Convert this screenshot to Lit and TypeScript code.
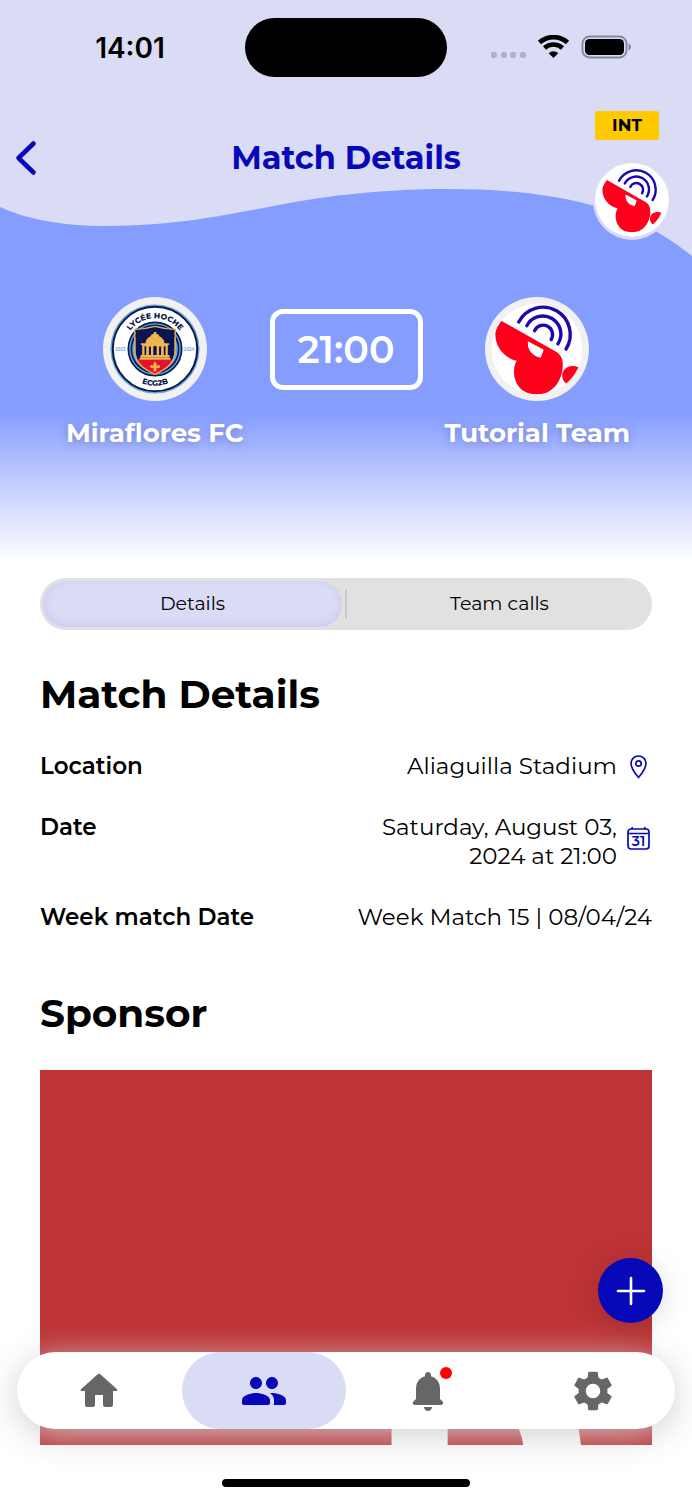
import { LitElement, html, css, svg } from "lit";
import { customElement, property, state } from "lit/decorators.js";
import { classMap } from "lit/directives/class-map.js";

const ICONS = {
  home: "M10 19v-5h4v5c0 .55.45 1 1 1h3c.55 0 1-.45 1-1v-7h1.7c.46 0 .68-.57.33-.87L12.67 3.6c-.38-.34-.96-.34-1.34 0l-8.36 7.53c-.34.3-.13.87.33.87H5v7c0 .55.45 1 1 1h3c.55 0 1-.45 1-1z",
  team: "M16 11c1.66 0 2.99-1.34 2.99-3S17.66 5 16 5s-3 1.34-3 3 1.34 3 3 3zm-8 0c1.66 0 2.99-1.34 2.99-3S9.66 5 8 5 5 6.34 5 8s1.34 3 3 3zm0 2c-2.33 0-7 1.17-7 3.5V18c0 .55.45 1 1 1h12c.55 0 1-.45 1-1v-1.5c0-2.33-4.67-3.5-7-3.5zm8 0c-.29 0-.62.02-.97.05.02.01.03.03.04.04 1.14.83 1.93 1.94 1.93 3.41V18c0 .35-.07.69-.18 1H22c.55 0 1-.45 1-1v-1.5c0-2.33-4.67-3.5-7-3.5z",
  bell: "M12 22c1.1 0 2-.9 2-2h-4c0 1.1.89 2 2 2zm6-6v-5c0-3.07-1.64-5.64-4.5-6.32V4c0-.83-.67-1.5-1.5-1.5s-1.5.67-1.5 1.5v.68C7.63 5.36 6 7.92 6 11v5l-1.29 1.29c-.63.63-.19 1.71.7 1.71h13.17c.89 0 1.34-1.08.71-1.71L18 16z",
  gear: "M19.14 12.94c.04-.3.06-.61.06-.94 0-.32-.02-.64-.07-.94l2.03-1.58c.18-.14.23-.41.12-.61l-1.92-3.32c-.12-.22-.37-.29-.59-.22l-2.39.96c-.5-.38-1.03-.7-1.62-.94l-.36-2.54c-.04-.24-.24-.41-.48-.41h-3.84c-.24 0-.43.17-.47.41l-.36 2.54c-.59.24-1.13.57-1.62.94l-2.39-.96c-.22-.08-.47 0-.59.22L2.74 8.87c-.12.21-.08.47.12.61l2.03 1.58c-.05.3-.09.63-.09.94s.02.64.07.94l-2.03 1.58c-.18.14-.23.41-.12.61l1.92 3.32c.12.22.37.29.59.22l2.39-.96c.5.38 1.03.7 1.62.94l.36 2.54c.05.24.24.41.48.41h3.84c.24 0 .44-.17.47-.41l.36-2.54c.59-.24 1.13-.56 1.62-.94l2.39.96c.22.08.47 0 .59-.22l1.92-3.32c.12-.22.07-.47-.12-.61l-2.01-1.58zM12 15.6c-1.98 0-3.6-1.62-3.6-3.6s1.62-3.6 3.6-3.6 3.6 1.62 3.6 3.6-1.62 3.6-3.6 3.6z",
};

@customElement("whistle-logo")
class WhistleLogo extends LitElement {
  @property() ring = "#f1f1f1";

  static styles = css`
    :host { display: block; }
    svg { display: block; width: 100%; height: 100%; }
  `;

  render() {
    return html`<svg viewBox="-154 -154 308 308" role="img" aria-label="Tutorial Team logo">
      <defs><clipPath id="disc"><circle r="134" /></clipPath></defs>
      <circle r="154" fill=${this.ring} />
      <circle r="134" fill="#fff" />
      <g clip-path="url(#disc)">
        <path fill="#ff001c" d="M-106-84 54 7C74 18 78 36 76 54C74 92 48 135 0 135C-45 135-70 102-68 62C-67 50-64 42-60 35C-98 26-126-8-123-48C-121-63-114-76-106-84Z" />
        <path fill="#fff" d="M-27-23 20 2 11 26C-14 20-29 4-27-23Z" />
        <path fill="#ff001c" d="M126 56C104 44 80 52 75 74C73 89 80 99 94 107Z" />
      </g>
      <g fill="none" stroke="#1c08ae" stroke-width="10" stroke-linecap="round">
        <path d="M-54-80A80.7 80.7 0 1 1 86 0" />
        <path d="M-30-69A53.4 53.4 0 1 1 62-15" />
        <path d="M-7-54A27.8 27.8 0 1 1 42-28" />
      </g>
    </svg>`;
  }
}

@customElement("lycee-logo")
class LyceeLogo extends LitElement {
  static styles = css`
    :host { display: block; }
    svg { display: block; width: 100%; height: 100%; }
    .ring-text { font: 800 23px Montserrat, Inter, sans-serif; fill: #0a1a4a; text-anchor: middle; }
    .year { font: 700 13px Montserrat, Inter, sans-serif; fill: #7db3e2; text-anchor: middle; }
  `;

  render() {
    return html`<svg viewBox="-154 -154 308 308" role="img" aria-label="Lycée Hoche ECG2B crest">
      <defs>
        <path id="top" d="M-91 0A91 91 0 0 1 91 0" />
        <path id="bottom" d="M-109 0A109 109 0 0 0 109 0" />
        <clipPath id="shield"><path d="M-58-56Q-30-57 0-67Q30-57 58-56V0C58 42 34 60 0 74C-34 60-58 42-58 0Z" /></clipPath>
      </defs>
      <circle r="154" fill="#f1f1f1" />
      <circle r="132" fill="#6aa6dc" />
      <circle r="125" fill="#fff" stroke="#0a1a4a" stroke-width="6" />
      <circle r="79" fill="#6aa6dc" stroke="#0a1a4a" stroke-width="5" />
      <circle r="70" fill="#6aa6dc" stroke="#0a1a4a" stroke-width="5" />
      <g clip-path="url(#shield)">
        <rect x="-70" y="-70" width="140" height="150" fill="#0a1450" />
        <rect x="-70" y="31" width="140" height="60" fill="#e8102e" />
        <path fill="#f0b54e" d="M-43 26V18H-38V-12H-42V-17H-28C-27-30-20-34-13-38Q-12-44-4-45V-50H4V-45Q12-44 13-38C20-34 27-30 28-17H42V-12H38V18H43V26Z" />
        <path fill="#0a1450" d="M-31-8H-26V18H-31ZM-18-6Q-15-11-12-6V18H-18ZM-5-6Q0-13 5-6V18H-5ZM12-6Q15-11 18-6V18H12ZM26-8H31V18H26Z" />
        <path fill="#f0b54e" d="M-46 26H46V32H-46ZM0 37Q9 46 3 54Q10 42 15 51Q15 58 8 57H3L5 66H-5L-3 57H-8Q-15 58-15 51Q-10 42-3 54Q-9 46 0 37Z" />
      </g>
      <path d="M-60-58Q-30-59 0-67Q30-59 60-58V0C60 42 34 60 0 75C-34 60-60 42-60 0Z" fill="none" stroke="#e2ac55" stroke-width="4" />
      <text class="ring-text"><textPath href="#top" startOffset="50%">LYCÉE HOCHE</textPath></text>
      <text class="ring-text"><textPath href="#bottom" startOffset="50%">ECG2B</textPath></text>
      <text class="year" x="-103" y="5">2023</text>
      <text class="year" x="101" y="5">2024</text>
    </svg>`;
  }
}

@customElement("app-root")
class AppRoot extends LitElement {
  @state() private tab = "Details";

  static styles = css`
    :host {
      --navy: #0708b8;
      --lavender: #dadbf5;
      --sky: #859dff;
      display: flex;
      flex-direction: column;
      position: relative;
      box-sizing: border-box;
      height: 100vh;
      min-height: 1240px;
      background: #fff;
      color: #000;
      font-family: Montserrat, Inter, "Liberation Sans", sans-serif;
      overflow: hidden;
    }
    * { box-sizing: border-box; }
    h1, h2, dl, dd, dt, p { margin: 0; }
    svg { display: block; }
    button { font: inherit; color: inherit; border: 0; padding: 0; background: none; cursor: pointer; }

    .hero {
      display: grid;
      grid-template-columns: minmax(0, 1fr);
      height: 563px;
      flex: none;
      background: linear-gradient(var(--sky) 412px, #c8d2ff 490px, #fff 563px);
    }
    .wave { grid-area: 1 / 1; width: 100%; height: 260px; }
    .hero-content { grid-area: 1 / 1; display: flex; flex-direction: column; }

    .status {
      display: grid;
      grid-template-columns: 1fr 202px 1fr;
      align-items: center;
      height: 59px;
      margin-top: 18px;
    }
    .time { padding-left: 15px; text-align: center; font: 600 28px/32px Inter, sans-serif; }
    .island { height: 59px; border-radius: 30px; background: #000; }
    .indicators { display: flex; justify-content: flex-end; padding-right: 60px; }

    .appbar {
      display: grid;
      grid-template-columns: 1fr auto 1fr;
      align-items: start;
      margin-top: 34px;
      height: 129px;
    }
    .back { display: grid; width: 52px; height: 48px; margin-top: 23px; place-items: center; }
    .title { margin-top: 27px; font-size: 32px; line-height: 40px; font-weight: 700; color: var(--navy); }
    .corner { display: flex; flex-direction: column; align-items: flex-end; gap: 23px; padding-right: 23px; }
    .env {
      width: 64px;
      margin-right: 10px;
      border-radius: 3px;
      background: #ffc900;
      text-align: center;
      font-size: 17px;
      line-height: 29px;
      font-weight: 700;
    }
    .avatar { width: 74px; height: 74px; border-radius: 50%; box-shadow: 0 1px 0 2px var(--lavender); }

    .versus {
      display: grid;
      grid-template-columns: 1fr 153px 1fr;
      align-items: start;
      margin-top: 57px;
      padding: 0 40px;
    }
    .team { display: flex; flex-direction: column; align-items: center; gap: 16px; }
    .crest { width: 104px; height: 104px; }
    .team-name {
      font-size: 26px;
      line-height: 32px;
      font-weight: 700;
      color: #fff;
      white-space: nowrap;
      text-shadow: 0 2px 8px rgba(60, 70, 150, .4);
    }
    .kickoff {
      display: grid;
      place-items: center;
      height: 81px;
      margin-top: 12px;
      border: 5px solid #fff;
      border-radius: 13px;
      color: #fff;
      font-size: 38px;
      line-height: 44px;
      font-weight: 600;
    }

    .body { display: flex; flex: 1; flex-direction: column; min-height: 0; padding: 15px 40px 0; }
    .tabs {
      display: grid;
      grid-template-columns: 1fr 2px 1fr;
      align-items: center;
      gap: 3px;
      flex: none;
      height: 52px;
      padding: 3px;
      border-radius: 26px;
      background: #e1e1e1;
    }
    .tab { height: 46px; border-radius: 23px; font-size: 19px; line-height: 24px; }
    .tab.active { background: var(--lavender); box-shadow: inset 0 -2px 10px #c9c9f1; }
    .divider { height: 30px; background: #cacaca; }

    .heading { font-size: 39px; line-height: 48px; font-weight: 700; }
    .details-heading { margin-top: 40px; }
    .details { display: grid; gap: 32px; margin-top: 34px; font-size: 23px; line-height: 29px; }
    .row { display: flex; justify-content: space-between; gap: 16px; }
    .label { font-weight: 600; }
    .value { display: flex; align-items: center; gap: 10px; text-align: right; }
    .value-text { max-width: 240px; }
    .value-text.wide { max-width: none; }
    .calendar-day { font: 600 14px Montserrat, Inter, sans-serif; fill: var(--navy); text-anchor: middle; }
    .sponsor-heading { margin-top: 57px; }
    .sponsor { flex: 1; min-height: 0; margin-top: 33px; width: 100%; background: #be3336; }

    .home-area { display: grid; flex: none; height: 55px; justify-content: center; padding-top: 34px; }
    .home-indicator { width: 248px; height: 8px; border-radius: 4px; background: #000; }

    .fab {
      position: absolute;
      right: 29px;
      bottom: 177px;
      display: grid;
      place-items: center;
      width: 65px;
      height: 65px;
      border-radius: 50%;
      background: var(--navy);
      box-shadow: 0 4px 30px rgba(0, 0, 0, .14);
    }
    .nav {
      position: absolute;
      left: 17px;
      right: 17px;
      bottom: 71px;
      display: grid;
      grid-template-columns: repeat(4, 1fr);
      height: 77px;
      border-radius: 39px;
      background: #fff;
      box-shadow: 0 6px 34px rgba(206, 206, 206, .95);
      color: #666;
    }
    .nav-link { display: grid; place-items: center; border-radius: 39px; color: inherit; }
    .nav-link.active { background: var(--lavender); color: var(--navy); }
    .nav-icon { position: relative; }
    .dot {
      position: absolute;
      top: 0;
      right: 0;
      width: 12px;
      height: 12px;
      border-radius: 50%;
      background: #f00;
    }
  `;

  private tabButton(name: string) {
    const active = this.tab === name;
    return html`<button class=${classMap({ tab: true, active })} role="tab" aria-selected=${active}
      @click=${() => (this.tab = name)}>${name}</button>`;
  }

  private navLink(label: string, icon: string, active = false, dot = false) {
    return html`<a class=${classMap({ "nav-link": true, active })} href="#${label.toLowerCase()}" aria-label=${label}>
      <span class="nav-icon">
        <svg width="48" height="48" viewBox="0 0 24 24" fill="currentColor" aria-hidden="true">${svg`<path d=${icon} />`}</svg>
        ${dot ? html`<span class="dot"></span>` : ""}
      </span>
    </a>`;
  }

  render() {
    return html`
      <header class="hero">
        <svg class="wave" viewBox="0 0 692 260" preserveAspectRatio="none" aria-hidden="true">
          <path fill="#dadbf5" d="M0 0V207C30 221 70 226 105 226C200 226 260 206 320 198C370 191 410 189 446 189C505 189 550 194 591 205C630 215 665 234 692 256V0Z" />
        </svg>
        <div class="hero-content">
          <div class="status">
            <span class="time">14:01</span>
            <span class="island"></span>
            <span class="indicators">
              <svg width="142" height="26" viewBox="0 0 142 26" role="img" aria-label="Wi-Fi, battery full">
                <g fill="#b0b1c6">
                  <rect x="1" y="17" width="6" height="6" rx="2" /><rect x="11" y="17" width="6" height="6" rx="2" />
                  <rect x="20" y="17" width="6" height="6" rx="2" /><rect x="30" y="17" width="6" height="6" rx="2" />
                </g>
                <path d="M49.500 7.500A21 21 0 0 1 77.500 7.500" fill="none" stroke="#000" stroke-width="4.800" />
                <path d="M54.500 13A13.500 13.500 0 0 1 72.500 13" fill="none" stroke="#000" stroke-width="4.600" />
                <path d="M63.500 23 58.700 18.200A7 7 0 0 1 68.300 18.200Z" />
                <rect x="92.500" y="1.500" width="44" height="21" rx="7" fill="none" stroke="#85869b" stroke-width="1.800" />
                <rect x="95" y="4" width="39" height="16" rx="4.500" />
                <path d="M138.500 8.500Q141 9.500 141 12T138.500 15.500Z" fill="#85869b" />
              </svg>
            </span>
          </div>
          <div class="appbar">
            <button class="back" aria-label="Back">
              <svg width="24" height="36" viewBox="0 0 24 36" fill="none" stroke="#0708b8" stroke-width="4.600" stroke-linecap="round" stroke-linejoin="round"><path d="M19.500 3.500 4.500 18 19.500 32.500" /></svg>
            </button>
            <h1 class="title">Match Details</h1>
            <div class="corner">
              <span class="env">INT</span>
              <whistle-logo class="avatar" ring="#fff"></whistle-logo>
            </div>
          </div>
          <div class="versus">
            <div class="team"><lycee-logo class="crest"></lycee-logo><span class="team-name">Miraflores FC</span></div>
            <div class="kickoff">21:00</div>
            <div class="team"><whistle-logo class="crest"></whistle-logo><span class="team-name">Tutorial Team</span></div>
          </div>
        </div>
      </header>

      <main class="body">
        <div class="tabs" role="tablist">
          ${this.tabButton("Details")}<span class="divider"></span>${this.tabButton("Team calls")}
        </div>
        <h2 class="heading details-heading">Match Details</h2>
        <dl class="details">
          <div class="row">
            <dt class="label">Location</dt>
            <dd class="value"><span class="value-text">Aliaguilla Stadium</span>
              <svg width="25" height="24" viewBox="0 0 25 24" fill="none" stroke="#0708b8" stroke-width="1.700" aria-hidden="true">
                <path d="M11.500 22.500C8.500 19 4 13 4 8.500A7.500 7.500 0 0 1 19 8.500C19 13 14.500 19 11.500 22.500Z" /><circle cx="11.500" cy="8.500" r="2.700" />
              </svg>
            </dd>
          </div>
          <div class="row">
            <dt class="label">Date</dt>
            <dd class="value"><span class="value-text">Saturday, August 03, 2024 at 21:00</span>
              <svg width="25" height="30" viewBox="0 0 25 30" fill="none" stroke="#0708b8" stroke-width="1.700" aria-hidden="true">
                <rect x="1" y="2" width="21" height="20" rx="3" /><path d="M1 6.500H22M5.200 0V2M17.800 0V2" />
                <text class="calendar-day" stroke="none" x="11.500" y="19">31</text>
              </svg>
            </dd>
          </div>
          <div class="row">
            <dt class="label">Week match Date</dt>
            <dd class="value"><span class="value-text wide">Week Match 15 | 08/04/24</span></dd>
          </div>
        </dl>
        <h2 class="heading sponsor-heading">Sponsor</h2>
        <svg class="sponsor" viewBox="0 0 611 375" preserveAspectRatio="xMidYMax slice" role="img" aria-label="Sponsor banner">
          <path fill="#fff" d="M351 345H407V375H351ZM470 345Q480 358 482.500 375H540L536 345Z" />
        </svg>
      </main>

      <div class="home-area"><div class="home-indicator"></div></div>

      <button class="fab" aria-label="Add">
        <svg width="30" height="30" viewBox="0 0 30 30" stroke="#fff" stroke-width="2.600" stroke-linecap="round"><path d="M15 2V28M2 15H28" /></svg>
      </button>
      <nav class="nav">
        ${this.navLink("Home", ICONS.home)}
        ${this.navLink("Team", ICONS.team, true)}
        ${this.navLink("Notifications", ICONS.bell, false, true)}
        ${this.navLink("Settings", ICONS.gear)}
      </nav>
    `;
  }
}
